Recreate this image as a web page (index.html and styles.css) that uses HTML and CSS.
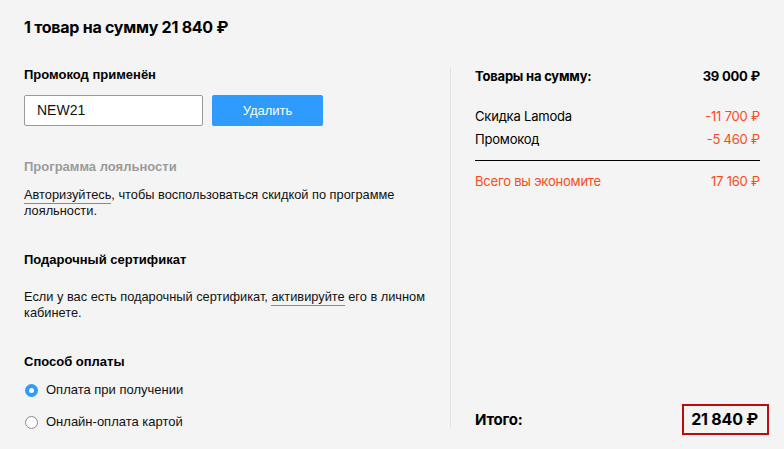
FILE: index.html
```html
<!DOCTYPE html>
<html lang="ru">
<head>
<meta charset="utf-8">
<link rel="stylesheet" href="styles.css">
</head>
<body>
<div class="page">
  <h1 class="title">1 товар на сумму 21 840 ₽</h1>
  <div class="main">
    <div class="left">
      <h3 class="label">Промокод применён</h3>
      <div class="promo">
        <div class="input">NEW21</div>
        <button class="btn">Удалить</button>
      </div>
      <h3 class="label muted gap-lg">Программа лояльности</h3>
      <p class="text gap-sm"><span class="link">Авторизуйтесь</span>, чтобы воспользоваться скидкой по программе<br>лояльности.</p>
      <h3 class="label gap-lg">Подарочный сертификат</h3>
      <p class="text gap-md">Если у вас есть подарочный сертификат, <span class="link">активируйте</span> его в личном<br>кабинете.</p>
      <h3 class="label gap-lg">Способ оплаты</h3>
      <div class="radio gap-sm"><span class="dot on"></span>Оплата при получении</div>
      <div class="radio gap-r"><span class="dot"></span>Онлайн-оплата картой</div>
    </div>
    <div class="right">
      <div class="row bold"><span>Товары на сумму:</span><span>39 000 ₽</span></div>
      <div class="row first"><span>Скидка Lamoda</span><span class="red">-11 700 ₽</span></div>
      <div class="row next"><span>Промокод</span><span class="red">-5 460 ₽</span></div>
      <div class="rule"></div>
      <div class="row red save"><span>Всего вы экономите</span><span>17 160 ₽</span></div>
      <div class="total"><span>Итого:</span><span class="box">21 840 ₽</span></div>
    </div>
  </div>
</div>
</body>
</html>
```
FILE: styles.css
```css
* { box-sizing: border-box; }
html, body { margin: 0; padding: 0; }
body {
  background: #f4f4f4;
  color: #000;
  font-family: "Liberation Sans", Arial, sans-serif;
  width: 784px;
  height: 449px;
  overflow: hidden;
}
.page { padding: 17px 0 0 0; }
.title {
  margin: 0 0 0 24px;
  font-family: Inter, "Liberation Sans", sans-serif;
  font-weight: 700;
  font-size: 16px;
  line-height: 20px;
  letter-spacing: -0.25px;
}
.main {
  display: flex;
  margin-top: 30px;
}
.left {
  width: 451px;
  padding-left: 24px;
  border-right: 1px solid #e2e2e2;
  height: 361px;
}
.label {
  margin: 0;
  font-size: 13px;
  line-height: 16px;
  font-weight: 700;
}
.muted { color: #9b9b9b; }
.promo {
  display: flex;
  gap: 9px;
  margin-top: 12px;
}
.input {
  width: 179px;
  height: 31px;
  border: 1px solid #9a9a9a;
  border-radius: 2px;
  background: #fff;
  font-size: 14px;
  line-height: 29px;
  padding-left: 12px;
  color: #111;
}
.btn {
  width: 111px;
  height: 31px;
  border: 0;
  border-radius: 2px;
  background: #2f9bff;
  color: #fff;
  font-family: "Liberation Sans", Arial, sans-serif;
  font-size: 13px;
  padding: 0;
}
.text {
  margin: 0;
  font-size: 12.8px;
  line-height: 16px;
  color: #111;
}
.link {
  border-bottom: 1px solid #8a8a8a;
  padding-bottom: 1px;
}
.radio {
  display: flex;
  align-items: center;
  font-size: 13px;
  line-height: 16px;
  color: #111;
}
.dot {
  width: 13px;
  height: 13px;
  border-radius: 50%;
  border: 1px solid #8c8c8c;
  background: #fff;
  margin-left: 1px;
  margin-right: 8px;
  position: relative;
}
.dot.on {
  border: 0;
  background: #2f9bff;
}
.dot.on::after {
  content: "";
  position: absolute;
  left: 4px;
  top: 4px;
  width: 5px;
  height: 5px;
  border-radius: 50%;
  background: #fff;
}
.gap-lg { margin-top: 33px; }
.gap-sm { margin-top: 12px; }
.gap-md { margin-top: 21px; }
.gap-r { margin-top: 16px; }
.right {
  flex: 1;
  padding: 1px 24px 0 24px;
  display: flex;
  flex-direction: column;
  font-family: Inter, "Liberation Sans", sans-serif;
  font-size: 13px;
  height: 368px;
}
.row {
  display: flex;
  justify-content: space-between;
  line-height: 16px;
  letter-spacing: -0.2px;
}
.bold { font-weight: 700; }
.first { margin-top: 24px; }
.next { margin-top: 7px; }
.red { color: #ff4a1a; }
.rule {
  height: 1px;
  background: #000;
  margin-top: 13px;
}
.save { margin-top: 12px; }
.total {
  margin-top: auto;
  display: flex;
  justify-content: space-between;
  align-items: center;
  font-weight: 700;
  font-size: 15px;
  letter-spacing: -0.2px;
}
.box {
  border: 2px solid #bf0b0b;
  font-size: 16px;
  line-height: 27px;
  padding: 0 9px 0 7px;
  margin-right: -9px;
}
```
